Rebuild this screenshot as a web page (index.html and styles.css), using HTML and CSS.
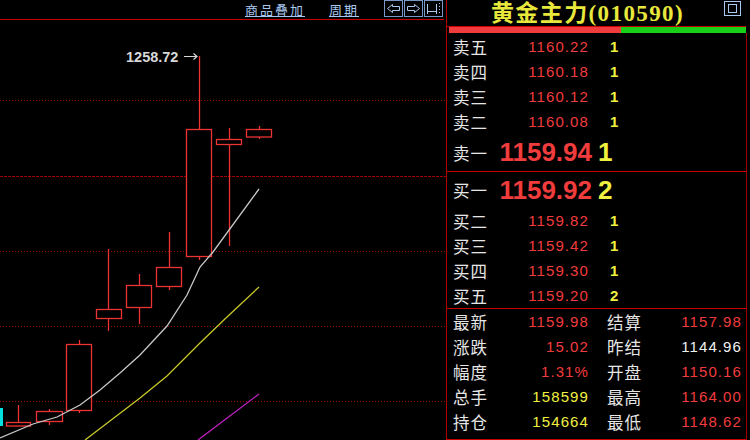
FILE: index.html
```html
<!DOCTYPE html>
<html lang="zh">
<head>
<meta charset="utf-8">
<link rel="stylesheet" href="styles.css">
</head>
<body>
<div class="app">
  <div class="chart-pane">
    <div class="toolbar">
      <a class="tlink overlay">商品叠加</a>
      <a class="tlink period">周期</a>
      <div class="tbtns">
        <span class="tbtn"><svg width="17" height="15" viewBox="0 0 17 15"><path d="M2.5 7.5 L7.5 3.5 V5.5 H14.5 V9.5 H7.5 V11.5 Z" fill="none" stroke="#a8c8f0" stroke-width="1"/></svg></span>
        <span class="tbtn"><svg width="17" height="15" viewBox="0 0 17 15"><path d="M14.5 7.5 L9.5 3.5 V5.5 H2.5 V9.5 H9.5 V11.5 Z" fill="none" stroke="#a8c8f0" stroke-width="1"/></svg></span>
        <span class="tbtn"><svg width="17" height="15" viewBox="0 0 17 15"><path d="M2.5 3 V13 M2.5 10.5 H11.5 M11.5 3 V13" fill="none" stroke="#a8c8f0" stroke-width="1"/><path d="M14.5 2 V3 M14.5 5 V6 M14.5 8 V9 M14.5 11 V12" stroke="#a8c8f0" stroke-width="1"/></svg></span>
      </div>
    </div>
    <svg class="chart" width="446" height="420" viewBox="0 20 446 420">
      <g stroke="#9a0000" stroke-width="1" stroke-dasharray="1 2">
        <line x1="0" y1="100.5" x2="446" y2="100.5"/>
        <line x1="0" y1="251.5" x2="446" y2="251.5"/>
        <line x1="0" y1="326.5" x2="446" y2="326.5"/>
        <line x1="0" y1="401.5" x2="446" y2="401.5"/>
      </g>
      <line x1="0" y1="176.5" x2="446" y2="176.5" stroke="#a00000" stroke-width="1" stroke-dasharray="3 1"/>
      <rect x="0" y="408" width="3" height="18" fill="#00e0e0"/>
      <g stroke="#ec3434" stroke-width="1.3" fill="#000">
        <line x1="18.5" y1="405" x2="18.5" y2="426"/>
        <rect x="6.5" y="422.5" width="24" height="3.5"/>
        <line x1="49.5" y1="409" x2="49.5" y2="425"/>
        <rect x="36.5" y="411.5" width="26" height="10"/>
        <line x1="79.5" y1="340" x2="79.5" y2="413"/>
        <rect x="66.5" y="344.5" width="25" height="66"/>
        <line x1="108.5" y1="249" x2="108.5" y2="331"/>
        <rect x="96.5" y="309.5" width="25" height="9"/>
        <line x1="139.5" y1="274" x2="139.5" y2="324"/>
        <rect x="126.5" y="285.5" width="25" height="22"/>
        <line x1="169.5" y1="232" x2="169.5" y2="290"/>
        <rect x="156.5" y="267.5" width="25" height="19"/>
        <line x1="199.5" y1="56" x2="199.5" y2="260"/>
        <rect x="186.5" y="129.5" width="25" height="127"/>
        <line x1="229.5" y1="128" x2="229.5" y2="246"/>
        <rect x="216.5" y="139.5" width="25" height="5"/>
        <line x1="259.5" y1="126" x2="259.5" y2="139"/>
        <rect x="246.5" y="129.5" width="25" height="7.5"/>
      </g>
      <polyline fill="none" stroke="#c8c8c8" stroke-width="1.3" points="0,438 33,424 57,417 80,405 100,390 120,373 140,355 167,326 187,295 200,267 213,252 259,189"/>
      <polyline fill="none" stroke="#c8c828" stroke-width="1.3" points="85,440 140,398 167,376 200,343 227,317 259,287"/>
      <polyline fill="none" stroke="#c020c0" stroke-width="1.3" points="198,440 259,394"/>
      <text x="126" y="61.5" class="hi-label">1258.72</text>
      <path d="M184 56.5 H197 M193.5 53.5 L197 56.5 L193.5 59.5" fill="none" stroke="#d8d8d8" stroke-width="1.2"/>
    </svg>
  </div>
  <div class="quote-pane">
    <div class="title-bar">
      <div class="title">黄金主力(010590)</div>
      <span class="win-btn"><svg width="17" height="15" viewBox="0 0 17 15"><rect x="0.5" y="0.5" width="16" height="14" fill="none" stroke="#a8c8f0"/><rect x="4.5" y="3.5" width="8" height="8" fill="none" stroke="#a8c8f0"/></svg></span>
    </div>
    <div class="ratio"><span class="ratio-buy" style="width:58%"></span><span class="ratio-sell"></span></div>
    <div class="body">
      <div class="book sell">
        <div class="row"><span class="lbl">卖五</span><span class="px">1160.22</span><span class="vol">1</span></div>
        <div class="row"><span class="lbl">卖四</span><span class="px">1160.18</span><span class="vol">1</span></div>
        <div class="row"><span class="lbl">卖三</span><span class="px">1160.12</span><span class="vol">1</span></div>
        <div class="row"><span class="lbl">卖二</span><span class="px">1160.08</span><span class="vol">1</span></div>
        <div class="row big best-sell"><span class="lbl">卖一</span><span class="px">1159.94</span><span class="vol">1</span></div>
      </div>
      <div class="book buy">
        <div class="row big best-buy"><span class="lbl">买一</span><span class="px">1159.92</span><span class="vol">2</span></div>
        <div class="row"><span class="lbl">买二</span><span class="px">1159.82</span><span class="vol">1</span></div>
        <div class="row"><span class="lbl">买三</span><span class="px">1159.42</span><span class="vol">1</span></div>
        <div class="row"><span class="lbl">买四</span><span class="px">1159.30</span><span class="vol">1</span></div>
        <div class="row"><span class="lbl">买五</span><span class="px">1159.20</span><span class="vol">2</span></div>
      </div>
      <div class="stats">
        <div class="srow"><span class="lbl">最新</span><span class="val red">1159.98</span><span class="lbl2">结算</span><span class="val red">1157.98</span></div>
        <div class="srow"><span class="lbl">涨跌</span><span class="val red">15.02</span><span class="lbl2">昨结</span><span class="val white">1144.96</span></div>
        <div class="srow"><span class="lbl">幅度</span><span class="val red">1.31%</span><span class="lbl2">开盘</span><span class="val red">1150.16</span></div>
        <div class="srow"><span class="lbl">总手</span><span class="val yellow">158599</span><span class="lbl2">最高</span><span class="val red">1164.00</span></div>
        <div class="srow"><span class="lbl">持仓</span><span class="val yellow">154664</span><span class="lbl2">最低</span><span class="val red">1148.62</span></div>
      </div>
    </div>
  </div>
</div>
</body>
</html>
```

FILE: styles.css
```css
* { box-sizing: border-box; }
html, body {
  margin: 0;
  padding: 0;
  background: #000;
}
body {
  width: 750px;
  height: 440px;
  overflow: hidden;
  font-family: "Liberation Sans", "Noto Sans CJK SC", sans-serif;
  color: #e6e6e6;
}
.app {
  display: flex;
  height: 440px;
}
.chart-pane {
  width: 447px;
  height: 440px;
  border-right: 1px solid #b00000;
  display: flex;
  flex-direction: column;
}
.toolbar {
  height: 20px;
  width: 444px;
  border-bottom: 1px solid #c80000;
  display: flex;
  justify-content: flex-end;
  align-items: flex-start;
  padding-right: 1px;
}
.tlink {
  font-family: "Noto Sans CJK SC", sans-serif;
  font-size: 13px;
  line-height: 19px;
  height: 19px;
  letter-spacing: 2px;
  color: #a8c8f0;
  text-decoration: underline;
  text-underline-offset: 1px;
}
.overlay { margin-right: 24px; }
.period { margin-right: 25px; }
.tbtns {
  display: flex;
  gap: 1px;
}
.tbtn {
  display: block;
  width: 19px;
  height: 17px;
  border: 1px solid #7898c8;
}
.tbtn svg { display: block; }
.chart { display: block; }
.hi-label {
  font-family: "Liberation Sans", sans-serif;
  font-weight: bold;
  font-size: 14.5px;
  fill: #d8d8d8;
}
.quote-pane {
  width: 303px;
  height: 440px;
  display: flex;
  flex-direction: column;
}
.title-bar {
  height: 27px;
  border-bottom: 1px solid #c80000;
  display: flex;
  align-items: flex-start;
  margin-right: 4px;
}
.title {
  flex: 1;
  text-align: center;
  font-family: "Liberation Serif", "Noto Sans CJK SC", serif;
  font-weight: bold;
  font-size: 23px;
  line-height: 27px;
  letter-spacing: 1.4px;
  color: #e8e83c;
  padding-left: 10px;
}
.win-btn {
  display: block;
  margin: 1px 5px 0 6px;
}
.win-btn svg { display: block; }
.ratio {
  display: flex;
  height: 6px;
  margin: 0 4px 0 2px;
}
.ratio-buy { display: block; background: #f03c3c; }
.ratio-sell { display: block; flex: 1; background: #18d018; }
.body {
  flex: 1;
  border-right: 1px solid #a00000;
  margin-right: 3px;
  display: flex;
  flex-direction: column;
}
.book.sell {
  padding-top: 1px;
  border-bottom: 1px solid #c80000;
}
.book.buy {
  border-bottom: 1px solid #c80000;
}
.row {
  display: grid;
  grid-template-columns: 44px 92px 1fr;
  align-items: center;
  height: 25px;
  padding-left: 6px;
}
.lbl, .lbl2 {
  font-family: "Noto Sans CJK SC", sans-serif;
  font-size: 16.5px;
  letter-spacing: 1px;
  color: #e6e6e6;
  line-height: 20px;
}
.px {
  text-align: right;
  font-size: 15px;
  letter-spacing: 1.1px;
  color: #f03c3c;
}
.vol {
  padding-left: 21px;
  font-size: 15px;
  font-weight: bold;
  color: #f0f040;
}
.row.big { height: 37px; }
.row.best-buy { height: 36px; }
.row.big .px {
  font-size: 26px;
  font-weight: bold;
  letter-spacing: 0;
  margin-right: -3px;
}
.row.big .vol {
  font-size: 26px;
  font-weight: bold;
  padding-left: 9px;
}
.stats {
  flex: 1;
  border-bottom: 1px solid #c80000;
  padding-bottom: 2px;
}
.srow {
  display: grid;
  grid-template-columns: 44px 92px 18px 44px 91px;
  align-items: center;
  height: 25px;
  padding-left: 6px;
}
.srow .lbl2 { grid-column: 4; }
.val {
  text-align: right;
  font-size: 15px;
  letter-spacing: 1.1px;
}
.red { color: #f03c3c; }
.white { color: #f0f0f0; }
.yellow { color: #f0f040; }
```
